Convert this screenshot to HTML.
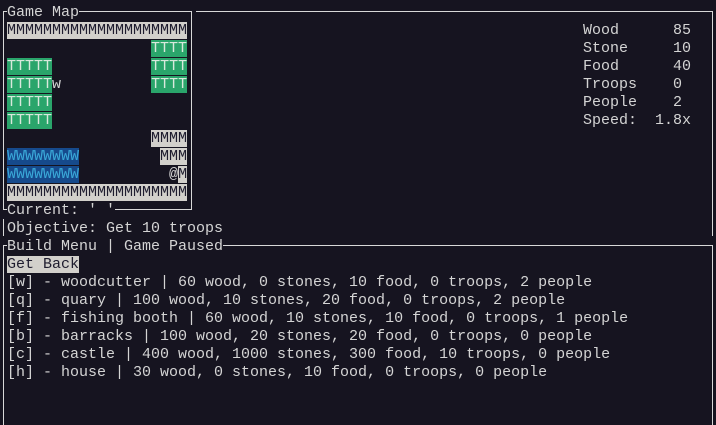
<!DOCTYPE html>
<html><head><style>
html,body{margin:0;padding:0;background:#161420;width:716px;height:425px;overflow:hidden}
.t{position:absolute;left:-2px;top:4px;margin:0;font:15px/18px "Liberation Mono",monospace;color:#d4d4d4;white-space:pre}
.m{background:#d2d0cb;color:#1e1c2e}
.g{background:#2aa56b;color:#d8e8dc}
.b{background:#164a8c;color:#3aa8d8}
.l{position:absolute;background:#d8d8d8}
.bg{background:#161420}
</style></head><body>
<div class="l" style="left:3px;top:11px;width:1px;height:199px"></div>
<div class="l" style="left:3px;top:11px;width:189px;height:1px"></div>
<div class="l" style="left:191px;top:11px;width:1px;height:199px"></div>
<div class="l" style="left:3px;top:209px;width:189px;height:1px"></div>
<div class="l" style="left:3px;top:219px;width:1px;height:17px"></div>
<div class="l" style="left:196px;top:11px;width:517px;height:1px"></div>
<div class="l" style="left:712px;top:11px;width:1px;height:225px"></div>
<div class="l" style="left:3px;top:245px;width:710px;height:1px"></div>
<div class="l" style="left:3px;top:245px;width:1px;height:180px"></div>
<div class="l" style="left:712px;top:245px;width:1px;height:180px"></div>
<pre class="t"> <span class="bg">Game Map</span>
 <span class="m">MMMMMMMMMMMMMMMMMMMM</span>
                 <span class="g">TTTT</span>
 <span class="g">TTTTT</span>           <span class="g">TTTT</span>
 <span class="g">TTTTT</span>w          <span class="g">TTTT</span>
 <span class="g">TTTTT</span>
 <span class="g">TTTTT</span>
                 <span class="m">MMMM</span>
 <span class="b">WWWWWWWW</span>         <span class="m">MMM</span>
 <span class="b">WWWWWWWW</span>          @<span class="m">M</span>
 <span class="m">MMMMMMMMMMMMMMMMMMMM</span>
 <span class="bg">Current: ' '</span>
 Objective: Get 10 troops
 <span class="bg">Build Menu | Game Paused</span>
 <span class="m">Get Back</span>
 [w] - woodcutter | 60 wood, 0 stones, 10 food, 0 troops, 2 people
 [q] - quary | 100 wood, 10 stones, 20 food, 0 troops, 2 people
 [f] - fishing booth | 60 wood, 10 stones, 10 food, 0 troops, 1 people
 [b] - barracks | 100 wood, 20 stones, 20 food, 0 troops, 0 people
 [c] - castle | 400 wood, 1000 stones, 300 food, 10 troops, 0 people
 [h] - house | 30 wood, 0 stones, 10 food, 0 troops, 0 people</pre>
<pre class="t" style="left:583px;top:22px">Wood      85
Stone     10
Food      40
Troops    0
People    2
Speed:  1.8x</pre>
</body></html>
